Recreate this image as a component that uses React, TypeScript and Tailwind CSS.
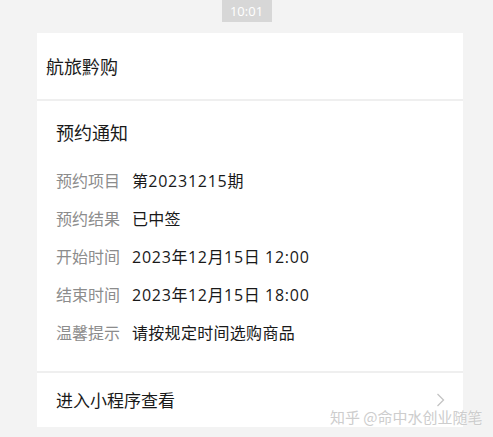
const font = { fontFamily: '"Noto Sans CJK SC", "Noto Sans", sans-serif' }

const rows = [
  { label: '预约项目', value: '第20231215期' },
  { label: '预约结果', value: '已中签' },
  { label: '开始时间', value: '2023年12月15日 12:00' },
  { label: '结束时间', value: '2023年12月15日 18:00' },
  { label: '温馨提示', value: '请按规定时间选购商品' },
]

// digits in the screenshot are wider than the CJK font's own, so give them their own run
const Mixed = ({ text }: { text: string }) => (
  <>
    {text.split(/([0-9: ]+)/).map((part, i) =>
      /[0-9]/.test(part) ? (
        <span key={i} className="font-['Open_Sans',sans-serif] tracking-[0.75px]">
          {part}
        </span>
      ) : (
        <span key={i}>{part}</span>
      )
    )}
  </>
)

export default function App() {
  return (
    <div className="relative h-[437px] w-[493px] overflow-hidden bg-[#f3f3f3]" style={font}>
      {/* time stamp */}
      <div className="mx-auto flex h-[22px] w-[50px] items-center justify-center bg-[#d7d7d7] font-['Open_Sans',sans-serif] text-[13px] leading-none text-white">
        10:01
      </div>

      {/* message card */}
      <div className="ml-[37px] mt-[11px] w-[426px] bg-white">
        <div className="flex h-[66px] items-center pl-[9px] text-[18px] text-[#191919]">
          航旅黔购
        </div>
        <div className="h-[2px] bg-[#efefef]" />

        <div className="pb-[20px] pl-[19px] pt-[19px]">
          <div className="mb-[17px] text-[18px] leading-[24px] text-[#191919]">预约通知</div>
          {rows.map((row) => (
            <div key={row.label} className="flex h-[38px] items-center text-[16px]">
              <span className="w-[76px] shrink-0 text-[#8c8c8c]">{row.label}</span>
              <span className="tracking-[0.3px] text-[#191919]">
                <Mixed text={row.value} />
              </span>
            </div>
          ))}
        </div>

        <div className="h-[2px] bg-[#efefef]" />
        <div className="flex h-[54px] items-center justify-between pl-[19px] pr-[18px]">
          <span className="text-[17px] text-[#191919]">进入小程序查看</span>
          <svg width="9" height="14" viewBox="0 0 9 14" fill="none">
            <polyline points="1.5,1 7.5,7 1.5,13" stroke="#c4c4c4" strokeWidth="1.3" />
          </svg>
        </div>
      </div>

      {/* watermark */}
      <div className="absolute left-[330px] top-[407px] whitespace-nowrap text-[15px] leading-[20px] text-[#cdcdcd] [text-shadow:0_0_2px_#ffffff]">
        知乎 @命中水创业随笔
      </div>
    </div>
  )
}
